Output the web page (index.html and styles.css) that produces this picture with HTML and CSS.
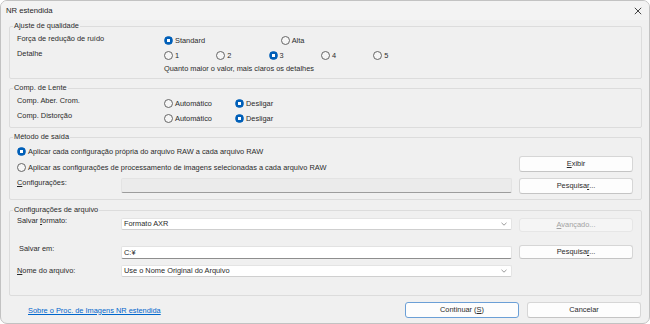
FILE: index.html
```html
<!DOCTYPE html>
<html lang="pt">
<head>
<meta charset="utf-8">
<title>NR estendida</title>
<link rel="stylesheet" href="styles.css">
</head>
<body>
<div class="window">
  <div class="titlebar">
    <span class="title">NR estendida</span>
    <svg class="close" width="8" height="8" viewBox="0 0 8 8"><path d="M0.8 0.8L7.2 7.2M7.2 0.8L0.8 7.2" stroke="#303030" stroke-width="0.9" fill="none"/></svg>
  </div>
  <div class="content">
    <fieldset class="group g1">
      <legend>Ajuste de qualidade</legend>
      <div class="row q1">
        <div class="lbl w147">Força de redução de ruído</div>
        <div class="opts">
          <label class="radio w-std"><span class="dot on"></span>Standard</label>
          <label class="radio"><span class="dot"></span>Alta</label>
        </div>
      </div>
      <div class="row q2">
        <div class="lbl w147">Detalhe</div>
        <div class="opts">
          <label class="radio w-det"><span class="dot"></span>1</label>
          <label class="radio w-det"><span class="dot"></span>2</label>
          <label class="radio w-det"><span class="dot on"></span>3</label>
          <label class="radio w-det"><span class="dot"></span>4</label>
          <label class="radio w-det"><span class="dot"></span>5</label>
        </div>
      </div>
      <div class="row q3">
        <div class="hint">Quanto maior o valor, mais claros os detalhes</div>
      </div>
    </fieldset>

    <fieldset class="group g2">
      <legend>Comp. de Lente</legend>
      <div class="row l1">
        <div class="lbl w147">Comp. Aber. Crom.</div>
        <div class="opts lopts">
          <label class="radio w-auto"><span class="dot"></span>Automático</label>
          <label class="radio"><span class="dot on"></span>Desligar</label>
        </div>
      </div>
      <div class="row l2">
        <div class="lbl w147">Comp. Distorção</div>
        <div class="opts lopts">
          <label class="radio w-auto"><span class="dot"></span>Automático</label>
          <label class="radio"><span class="dot on"></span>Desligar</label>
        </div>
      </div>
    </fieldset>

    <fieldset class="group g3">
      <legend>Método de saída</legend>
      <div class="row oA">
        <label class="radio"><span class="dot on"></span>Aplicar cada configuração própria do arquivo RAW a cada arquivo RAW</label>
      </div>
      <div class="row oB">
        <label class="radio"><span class="dot"></span>Aplicar as configurações de processamento de imagens selecionadas a cada arquivo RAW</label>
        <button class="btn side"><u>E</u>xibir</button>
      </div>
      <div class="row oC">
        <div class="lbl w104"><u>C</u>onfigurações:</div>
        <div class="field disabled h15"></div>
        <button class="btn side h15">Pesquisa<u>r</u>...</button>
      </div>
    </fieldset>

    <fieldset class="group g4">
      <legend>Configurações de arquivo</legend>
      <div class="row f1">
        <div class="lbl w104">Salvar <u>f</u>ormato:</div>
        <div class="field select">Formato AXR<svg class="chev" width="6" height="4" viewBox="0 0 6 4"><path d="M0.5 0.8L3 3.2L5.5 0.8" stroke="#707070" stroke-width="0.7" fill="none"/></svg></div>
        <button class="btn side dis"><u>A</u>vançado...</button>
      </div>
      <div class="row f2">
        <div class="lbl w104 indent">Salvar em:</div>
        <div class="field text">C:¥</div>
        <button class="btn side">Pesquisa<u>r</u>...</button>
      </div>
      <div class="row f3">
        <div class="lbl w104"><u>N</u>ome do arquivo:</div>
        <div class="field select">Use o Nome Original do Arquivo<svg class="chev" width="6" height="4" viewBox="0 0 6 4"><path d="M0.5 0.8L3 3.2L5.5 0.8" stroke="#707070" stroke-width="0.7" fill="none"/></svg></div>
      </div>
    </fieldset>

    <div class="footer">
      <a class="link" href="#">Sobre o Proc. de Imagens NR estendida</a>
      <div class="actions">
        <button class="btn primary">Continuar (<u>S</u>)</button>
        <button class="btn">Cancelar</button>
      </div>
    </div>
  </div>
</div>
</body>
</html>
```
FILE: styles.css
```css
* { box-sizing: border-box; }
html, body { margin: 0; padding: 0; background: #ffffff; }
body {
  font-family: "Liberation Sans", Arial, sans-serif;
  font-size: 7.4px;
  color: #2a2a2a;
}
.window {
  width: 650px;
  height: 324px;
  border: 1px solid #c2c2c2;
  border-radius: 7px;
  background: #f0f0f0;
  overflow: hidden;
  display: flex;
  flex-direction: column;
}
.titlebar {
  height: 19px;
  flex: 0 0 19px;
  background: #f3f3f3;
  display: flex;
  align-items: center;
  justify-content: space-between;
  padding: 0 7px 0 5px;
}
.title { font-size: 7.7px; color: #1f1f1f; }
.close { display: block; }
.content {
  padding: 0 7px 0 8px;
  display: flex;
  flex-direction: column;
}
.group {
  margin: 0;
  border: 1px solid #dcdcdc;
  border-radius: 2px;
  padding: 0 8px 0 3px;
  min-width: 0;
}
.group legend {
  padding: 0 1px;
  line-height: 10px;
  color: #2a2a2a;
}
.g1 { margin-top: 1px; padding-bottom: 4px; }
.g2 { margin-top: 4px; padding-bottom: 4px; }
.g3 { margin-top: 4px; padding-bottom: 5px; }
.g4 { margin-top: 5px; padding-bottom: 18px; }

.row {
  display: flex;
  align-items: flex-start;
  padding-left: 4px;
}
.lbl { line-height: 10px; white-space: nowrap; }
.w147 { width: 147px; flex: 0 0 147px; }
.w104 { width: 104px; flex: 0 0 104px; }
.indent { padding-left: 2px; }
.opts { display: flex; }

.radio {
  display: inline-flex;
  align-items: center;
  height: 10px;
  gap: 2px;
  white-space: nowrap;
}
.dot {
  width: 9px;
  height: 9px;
  flex: 0 0 9px;
  border-radius: 50%;
  border: 1px solid #666666;
  background: #f6f6f6;
}
.dot.on {
  border-color: #005fb8;
  background: radial-gradient(circle, #ffffff 0 1.5px, #005fb8 2px);
}
.w-std { width: 116.7px; }
.w-det { width: 52.3px; }
.w-auto { width: 71px; }

/* quality rows */
.q1 { margin-top: 3px; }
.q1 .opts { margin-top: 1px; }
.q2 { margin-top: 4px; }
.q2 .opts { margin-top: 1px; }
.q3 { margin-top: 4px; padding-left: 151px; }
.hint { line-height: 10px; white-space: nowrap; }

/* lens rows */
.l1 { margin-top: 3px; }
.l2 { margin-top: 2px; }
.lopts { margin-top: 2.5px; }

/* output method */
.oA { margin-top: 4px; }
.oB { height: 16px; justify-content: space-between; }
.oB .radio { align-self: flex-end; }
.oC { margin-top: 6px; }

.field {
  width: 391px;
  flex: 0 0 391px;
  border-radius: 2px;
}
.field.disabled {
  background: #ebebeb;
  border: 1px solid #e3e3e3;
  border-bottom: 1px solid #9c9c9c;
}
.h15 { height: 15px; }
.field.select {
  height: 12px;
  margin-top: 2px;
  background: #ffffff;
  border: 1px solid #e4e4e4;
  border-bottom-color: #cfcfcf;
  display: flex;
  align-items: center;
  justify-content: space-between;
  padding: 0 4px 0 2px;
  line-height: 10px;
}
.field.text {
  height: 13px;
  margin-top: 1px;
  background: #ffffff;
  border: 1px solid #e2e2e2;
  border-bottom: 1px solid #8e8e8e;
  display: flex;
  align-items: center;
  padding: 0 2px;
}
.chev { display: block; }

.btn {
  font-family: inherit;
  font-size: 7.4px;
  color: #2a2a2a;
  background: #fdfdfd;
  border: 1px solid #d6d6d6;
  border-bottom-color: #c4c4c4;
  border-radius: 3px;
  padding: 0;
  margin: 0;
  width: 114px;
  height: 16px;
  line-height: 10px;
  text-align: center;
}
.side { margin-left: 7px; }
.btn.dis {
  background: #f5f5f5;
  border-color: #e6e6e6;
  color: #a3a3a3;
  height: 14px;
  margin-top: 2px;
}

/* file settings */
.f1 { margin-top: 1px; }
.f2 { margin-top: 13px; }
.f2 .lbl { margin-top: -1px; }
.f2 .btn { height: 14px; }
.f3 { margin-top: 6px; align-items: center; }
.f3 .field.select { margin-top: 0; }

/* footer */
.footer {
  margin-top: 6px;
  height: 16px;
  display: flex;
  align-items: center;
  justify-content: space-between;
  padding: 0 1px 0 19px;
}
.link { color: #0066cc; text-decoration: underline; }
.actions { display: flex; gap: 8px; }
.btn.primary { border-color: #6b9fd6; }
```
